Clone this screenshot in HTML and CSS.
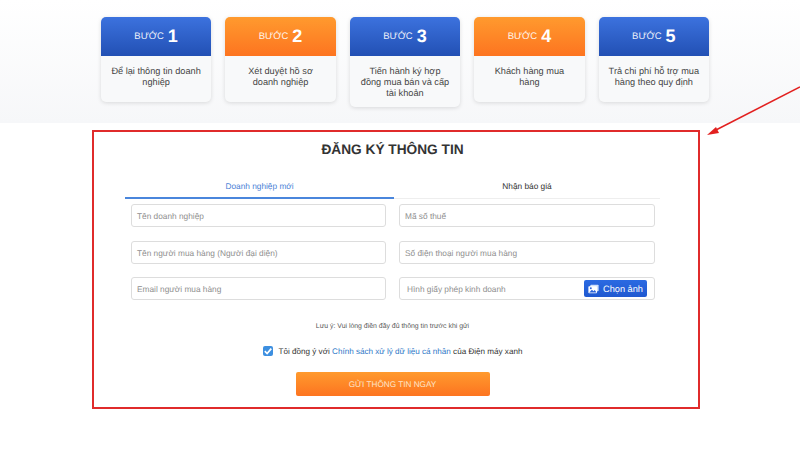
FILE: index.html
```html
<!DOCTYPE html>
<html lang="vi">
<head>
<meta charset="utf-8">
<title>Đăng ký thông tin</title>
<link rel="stylesheet" href="styles.css">
</head>
<body>
<section class="steps-band">
  <div class="steps">
    <article class="step"><div class="step-head blue"><span class="step-label">BƯỚC</span><span class="step-num">1</span></div><p class="step-text">Để lại thông tin doanh nghiệp</p></article>
    <article class="step"><div class="step-head orange"><span class="step-label">BƯỚC</span><span class="step-num">2</span></div><p class="step-text">Xét duyệt hồ sơ doanh nghiệp</p></article>
    <article class="step"><div class="step-head blue"><span class="step-label">BƯỚC</span><span class="step-num">3</span></div><p class="step-text">Tiến hành ký hợp đồng mua bán và cấp tài khoản</p></article>
    <article class="step"><div class="step-head orange"><span class="step-label">BƯỚC</span><span class="step-num">4</span></div><p class="step-text">Khách hàng mua hàng</p></article>
    <article class="step"><div class="step-head blue"><span class="step-label">BƯỚC</span><span class="step-num">5</span></div><p class="step-text">Trả chi phí hỗ trợ mua hàng theo quy định</p></article>
  </div>
</section>

<section class="form-box">
  <h1 class="form-title">ĐĂNG KÝ THÔNG TIN</h1>
  <div class="tabs">
    <div class="tab active">Doanh nghiệp mới</div>
    <div class="tab">Nhận báo giá</div>
  </div>
  <div class="fields">
    <div class="field">Tên doanh nghiệp</div>
    <div class="field">Mã số thuế</div>
    <div class="field">Tên người mua hàng (Người đại diện)</div>
    <div class="field">Số điện thoại người mua hàng</div>
    <div class="field">Email người mua hàng</div>
    <div class="field field-file">
      <span class="file-label">Hình giấy phép kinh doanh</span>
      <span class="pick-btn">
        <svg class="pick-icon" viewBox="0 0 14 12" aria-hidden="true">
          <rect x="3" y="0.5" width="10.5" height="8.5" rx="1" fill="#cfe0fb"/>
          <rect x="0.5" y="2.5" width="11" height="9" rx="1" fill="#fff"/>
          <circle cx="3.6" cy="5" r="1.2" fill="#2a62d8"/>
          <path d="M1.5 10.5 L5 7 L7 8.8 L8.6 7.4 L10.8 10.5 Z" fill="#2a62d8"/>
        </svg>
        Chọn ảnh
      </span>
    </div>
  </div>
  <p class="note">Lưu ý: Vui lòng điền đầy đủ thông tin trước khi gửi</p>
  <div class="consent">
    <span class="check"><svg viewBox="0 0 10 10" aria-hidden="true"><path d="M1.8 5.2 L4.1 7.5 L8.3 2.6" fill="none" stroke="#fff" stroke-width="1.7"/></svg></span>
    <span>Tôi đồng ý với <span class="link">Chính sách xử lý dữ liệu cá nhân</span> của Điện máy xanh</span>
  </div>
  <div class="submit">GỬI THÔNG TIN NGAY</div>
</section>

<svg class="arrow" viewBox="0 0 800 450" aria-hidden="true">
  <line x1="800" y1="87" x2="714" y2="131" stroke="#e2201f" stroke-width="1.5"/>
  <path d="M707 135 L716 127 L719 133 Z" fill="#e2201f"/>
</svg>
</body>
</html>
```

FILE: styles.css
```css
* { box-sizing: border-box; }
html, body { margin: 0; padding: 0; }
body {
  width: 800px;
  height: 450px;
  overflow: hidden;
  background: #fff;
  font-family: "Liberation Sans", Arial, sans-serif;
  color: #333;
  text-rendering: geometricPrecision;
}
.steps-band {
  height: 123px;
  padding: 17px 91px 0 101px;
  background: linear-gradient(to bottom, #fff 0%, #f6f7f9 100%);
}
.steps { display: flex; gap: 14.25px; align-items: flex-start; }
.step {
  width: 110.2px;
  min-height: 85px;
  background: #f8f9fa;
  border-radius: 5px;
  box-shadow: 0 1px 4px rgba(0, 0, 0, .13);
  overflow: hidden;
}
.step-head {
  height: 39px;
  display: flex;
  align-items: center;
  justify-content: center;
  gap: 4px;
  color: #fff;
}
.blue { background: linear-gradient(to bottom, #3c72de, #2250b4); }
.orange { background: linear-gradient(to bottom, #ff9a2e, #fd7420); }
.step-label { font-size: 9.5px; opacity: .9; }
.step-num { font-size: 18px; font-weight: 700; }
.step-text {
  margin: 0;
  padding: 10px 9.5px 8px;
  font-size: 9.2px;
  line-height: 11px;
  text-align: center;
  color: #444;
}
.form-box {
  width: 608px;
  height: 279px;
  margin: 7px 0 0 92px;
  padding: 0 38px 0 31px;
  border: 2px solid #e02b2b;
  background: #fff;
}
.form-title {
  margin: 0;
  padding-top: 8px;
  height: 43px;
  font-size: 13.7px;
  line-height: 20px;
  font-weight: 700;
  text-align: center;
  color: #333;
}
.tabs { display: flex; border-bottom: 1px solid #eee; height: 24px; }
.tab {
  flex: 1;
  height: 24px;
  font-size: 8.3px;
  line-height: 22px;
  text-align: center;
  color: #333;
}
.tab.active { flex: 0 0 269px; color: #4a7fd6; border-bottom: 2px solid #4a86dc; }
.fields {
  display: grid;
  grid-template-columns: 255px 256px;
  column-gap: 13px;
  row-gap: 13.5px;
  padding: 5px 5px 0 6px;
}
.field {
  height: 23px;
  padding: 0 5px;
  border: 1px solid #ddd;
  border-radius: 3px;
  font-size: 8.3px;
  line-height: 22px;
  color: #8f8f8f;
}
.field-file {
  display: flex;
  align-items: center;
  justify-content: space-between;
  padding: 0 7px 0 7px;
}
.file-label { padding-top: 1px; }
.pick-btn {
  display: flex;
  align-items: center;
  gap: 4px;
  height: 17px;
  width: 63px;
  justify-content: center;
  border-radius: 2px;
  background: linear-gradient(to bottom, #2b6ae2, #1f58d0);
  color: #fff;
  font-size: 9.2px;
}
.pick-icon { width: 11px; height: 10px; }
.note {
  margin: 0;
  padding-top: 21px;
  height: 37px;
  font-size: 6.9px;
  line-height: 11px;
  text-align: center;
  color: #555;
}
.consent {
  display: flex;
  align-items: center;
  justify-content: center;
  gap: 6px;
  height: 24px;
  padding-top: 4px;
  font-size: 8.1px;
  color: #333;
}
.check {
  width: 10px;
  height: 10px;
  border-radius: 2px;
  background: #3d8fe0;
  display: flex;
}
.check svg { width: 10px; height: 10px; }
.link { color: #2f78c8; }
.submit {
  width: 194px;
  height: 24.5px;
  margin: 10.5px auto 0;
  border-radius: 2px;
  background: linear-gradient(to bottom, #ff9a2e, #fd7420);
  color: #fde3c8;
  font-size: 8.2px;
  line-height: 25px;
  text-align: center;
}
.arrow {
  position: absolute;
  left: 0;
  top: 0;
  width: 800px;
  height: 450px;
  pointer-events: none;
}
```
